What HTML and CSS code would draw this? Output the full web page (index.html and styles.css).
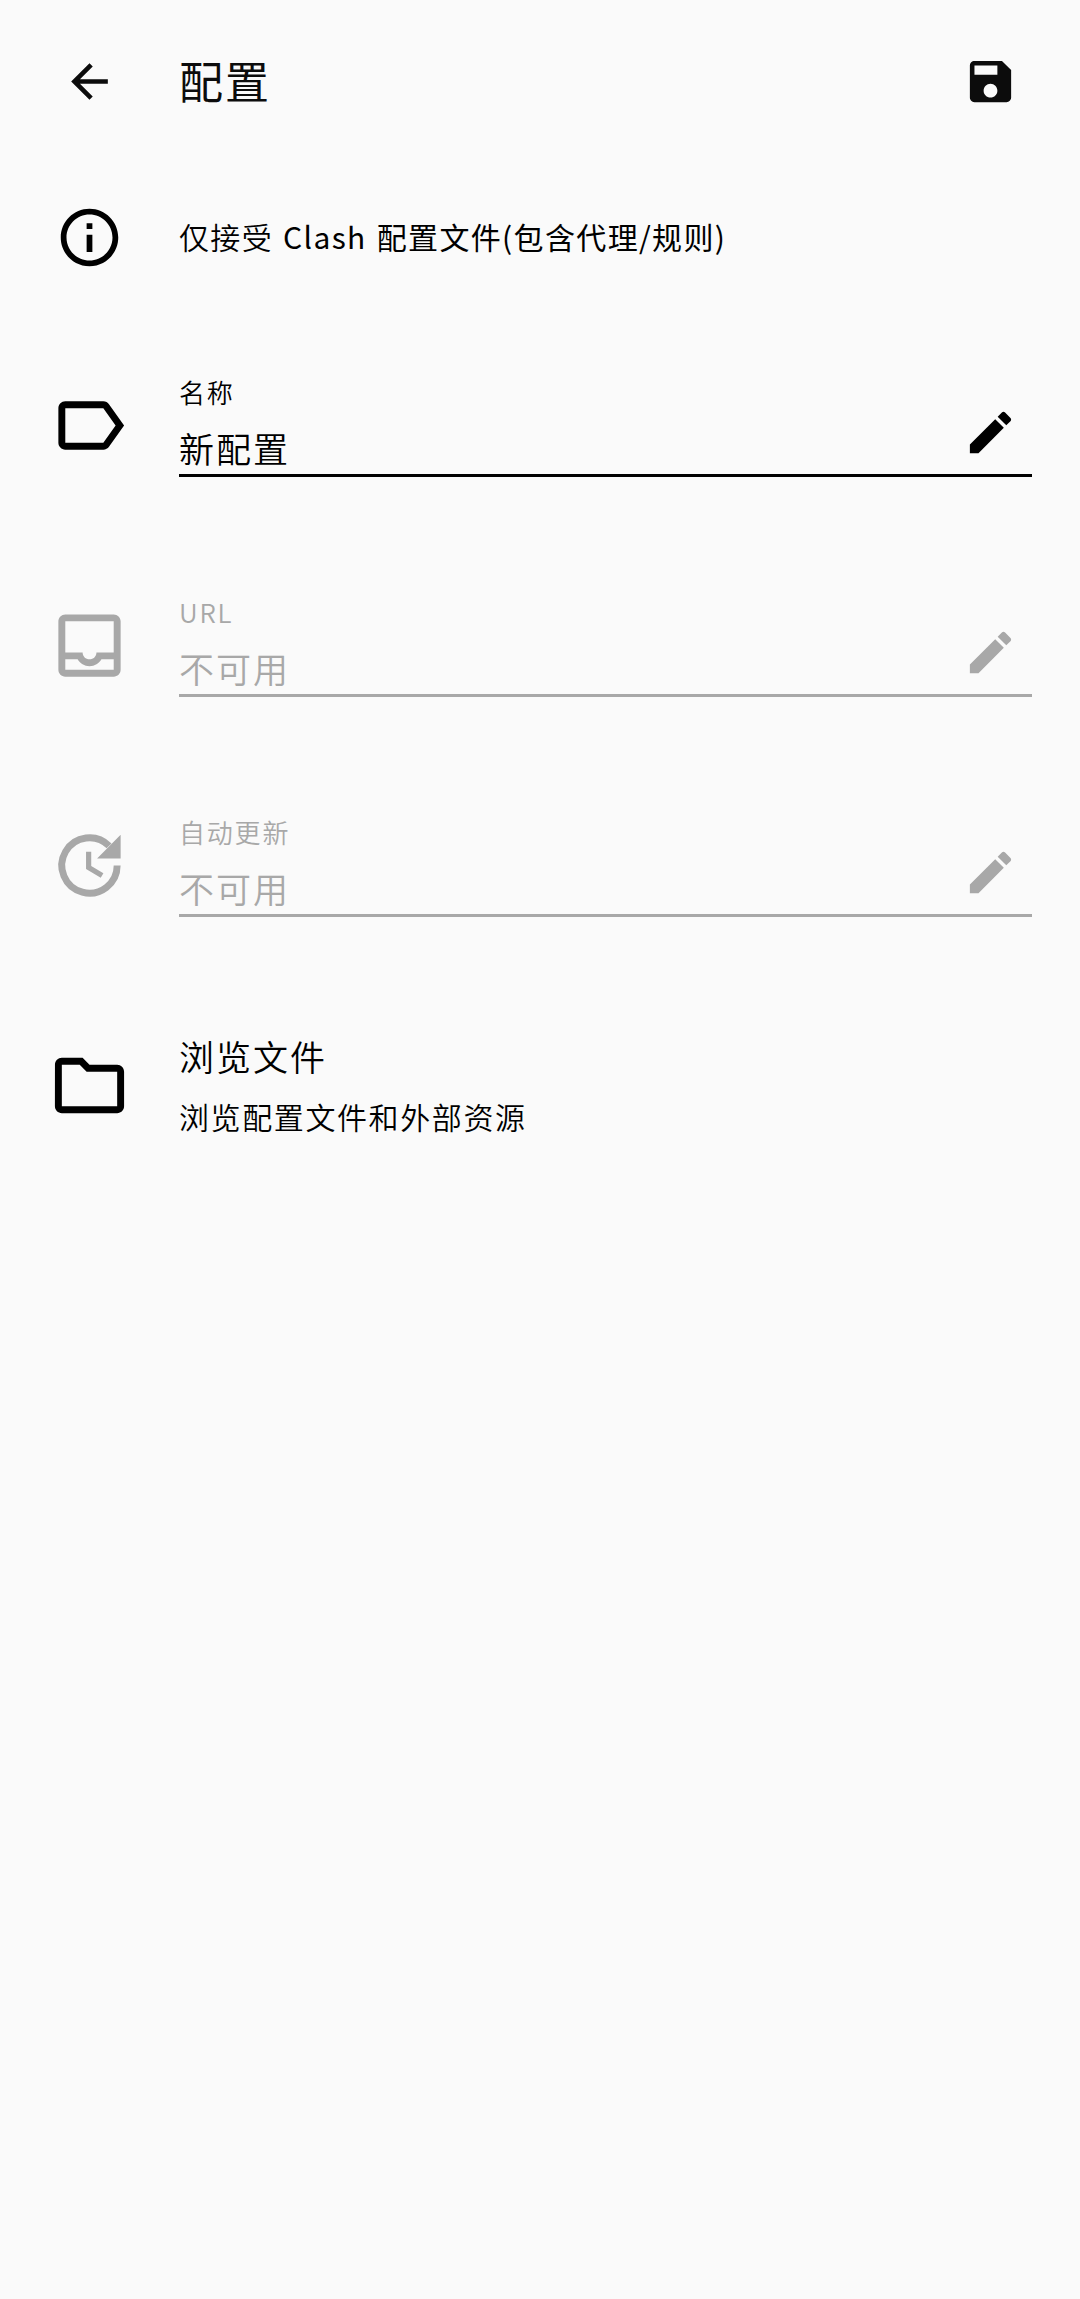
FILE: index.html
```html
<!DOCTYPE html>
<html lang="zh-CN">
<head>
    <meta charset="UTF-8">
    <meta name="viewport" content="width=device-width, initial-scale=1.0">
    <title>配置</title>
    <link rel="stylesheet" href="styles.css">
</head>
<body>
    <header class="toolbar">
        <div class="icon-cell">
            <svg class="icon-small" viewBox="0 0 24 24"><path d="M20 11H7.83l5.59-5.59L12 4l-8 8 8 8 1.41-1.41L7.83 13H20v-2z"/></svg>
        </div>
        <h1>配置</h1>
        <svg class="icon-small" viewBox="0 0 24 24"><path d="M17 3H5c-1.11 0-2 .9-2 2v14c0 1.1.89 2 2 2h14c1.1 0 2-.9 2-2V7l-4-4zm-5 16c-1.66 0-3-1.34-3-3s1.34-3 3-3 3 1.34 3 3-1.34 3-3 3zm3-10H5V5h10v4z"/></svg>
    </header>

    <main>
        <div class="tips">
            <div class="icon-cell">
                <svg class="icon-info" viewBox="0 0 24 24"><path d="M11 7h2v2h-2zm0 4h2v6h-2zm1-9C6.48 2 2 6.48 2 12s4.48 10 10 10 10-4.48 10-10S17.52 2 12 2zm0 18c-4.41 0-8-3.59-8-8s3.59-8 8-8 8 3.59 8 8-3.59 8-8 8z"/></svg>
            </div>
            <p class="small-text">仅接受 <span class="strong">Clash 配置文件(包含代理/规则)</span></p>
        </div>

        <div class="row">
            <div class="icon-cell">
                <svg class="icon" viewBox="0 0 24 24"><path d="M17.63 5.84C17.27 5.33 16.67 5 16 5L5 5.01C3.9 5.01 3 5.9 3 7v10c0 1.1.9 1.99 2 1.99L16 19c.67 0 1.27-.33 1.63-.84L22 12l-4.37-6.16zM16 17H5V7h11l3.55 5L16 17z"/></svg>
            </div>
            <div class="field">
                <div class="field-text">
                    <div class="label">名称</div>
                    <div class="value">新配置</div>
                </div>
                <svg class="icon-small" viewBox="0 0 24 24"><path d="M3 17.25V21h3.75L17.81 9.94l-3.75-3.75L3 17.25zM20.71 7.04c.39-.39.39-1.02 0-1.41l-2.34-2.34c-.39-.39-1.02-.39-1.41 0l-1.83 1.83 3.75 3.75 1.83-1.83z"/></svg>
            </div>
        </div>

        <div class="row disabled">
            <div class="icon-cell">
                <svg class="icon" viewBox="0 0 24 24"><path d="M19 3H5c-1.1 0-2 .9-2 2v14c0 1.1.9 2 2 2h14c1.1 0 2-.9 2-2V5c0-1.1-.9-2-2-2zm0 16H5v-3h3.56c.69 1.19 1.97 2 3.45 2s2.75-.81 3.45-2H19v3zm0-5h-4.99c0 1.1-.9 2-2 2s-2-.9-2-2H5V5h14v9z"/></svg>
            </div>
            <div class="field">
                <div class="field-text">
                    <div class="label">URL</div>
                    <div class="value">不可用</div>
                </div>
                <svg class="icon-small" viewBox="0 0 24 24"><path d="M3 17.25V21h3.75L17.81 9.94l-3.75-3.75L3 17.25zM20.71 7.04c.39-.39.39-1.02 0-1.41l-2.34-2.34c-.39-.39-1.02-.39-1.41 0l-1.83 1.83 3.75 3.75 1.83-1.83z"/></svg>
            </div>
        </div>

        <div class="row disabled">
            <div class="icon-cell">
                <svg class="icon" viewBox="0 0 24 24">
                    <path class="ring" d="M20 12A8 8 0 1 1 17.66 6.34"/>
                    <path d="M21 3.1V10h-6.8zM11 8v5l4.25 2.52.77-1.28-3.52-2.09V8z"/>
                </svg>
            </div>
            <div class="field">
                <div class="field-text">
                    <div class="label">自动更新</div>
                    <div class="value">不可用</div>
                </div>
                <svg class="icon-small" viewBox="0 0 24 24"><path d="M3 17.25V21h3.75L17.81 9.94l-3.75-3.75L3 17.25zM20.71 7.04c.39-.39.39-1.02 0-1.41l-2.34-2.34c-.39-.39-1.02-.39-1.41 0l-1.83 1.83 3.75 3.75 1.83-1.83z"/></svg>
            </div>
        </div>

        <div class="row">
            <div class="icon-cell">
                <svg class="icon" viewBox="0 0 24 24"><path d="M9.17 6l2 2H20v10H4V6h5.17M10 4H4c-1.1 0-1.99.9-1.99 2L2 18c0 1.1.9 2 2 2h16c1.1 0 2-.9 2-2V8c0-1.1-.9-2-2-2h-8l-2-2z"/></svg>
            </div>
            <div class="browse">
                <div class="value">浏览文件</div>
                <div class="small-text">浏览配置文件和外部资源</div>
            </div>
        </div>
    </main>
</body>
</html>
```
FILE: styles.css
```css
* {
    box-sizing: border-box;
}

body {
    margin: 0;
    min-height: 100vh;
    background-color: #fafafa;
    color: #000;
    font-family: "Noto Sans CJK SC", sans-serif;
    font-weight: 350;
}

svg {
    display: block;
    flex-shrink: 0;
    fill: currentColor;
}

.toolbar {
    display: flex;
    align-items: center;
    height: 163px;
    padding-right: 62px;
    color: #0c0c0c;
}

h1 {
    flex: 1;
    margin: 0;
    padding-bottom: 3px;
    font-size: 44px;
    font-weight: 400;
    line-height: 60px;
    letter-spacing: 2px;
}

.icon-cell {
    display: flex;
    flex-shrink: 0;
    justify-content: center;
    width: 179px;
}

.icon {
    width: 83px;
    height: 83px;
}

.icon-info {
    width: 69px;
    height: 69px;
}

.icon-small {
    width: 55px;
    height: 55px;
}

.tips {
    display: flex;
    align-items: center;
    height: 149px;
}

.small-text {
    margin: 0;
    font-size: 30px;
    line-height: 42px;
    letter-spacing: 1.6px;
}

.tips .small-text {
    padding-bottom: 4px;
    letter-spacing: 1.35px;
    word-spacing: 2px;
}

.strong {
    font-weight: 400;
}

.row {
    display: flex;
    align-items: center;
    height: 220px;
    padding: 6px 48px 0 0;
}

.field {
    display: flex;
    flex: 1;
    align-items: center;
    height: 103px;
    padding: 17px 14px 0 0;
    border-bottom: 3px solid currentColor;
}

.field-text {
    flex: 1;
    margin-top: -19px;
}

.label {
    font-size: 26px;
    line-height: 38px;
    letter-spacing: 1.8px;
}

.value {
    font-size: 35px;
    line-height: 50px;
    letter-spacing: 2px;
}

.field .value {
    margin-top: 12px;
}

.browse {
    padding-bottom: 3px;
}

.browse .small-text {
    margin-top: 14px;
}

.disabled {
    color: #a8a8a8;
}

.ring {
    fill: none;
    stroke: currentColor;
    stroke-width: 2;
}
```
